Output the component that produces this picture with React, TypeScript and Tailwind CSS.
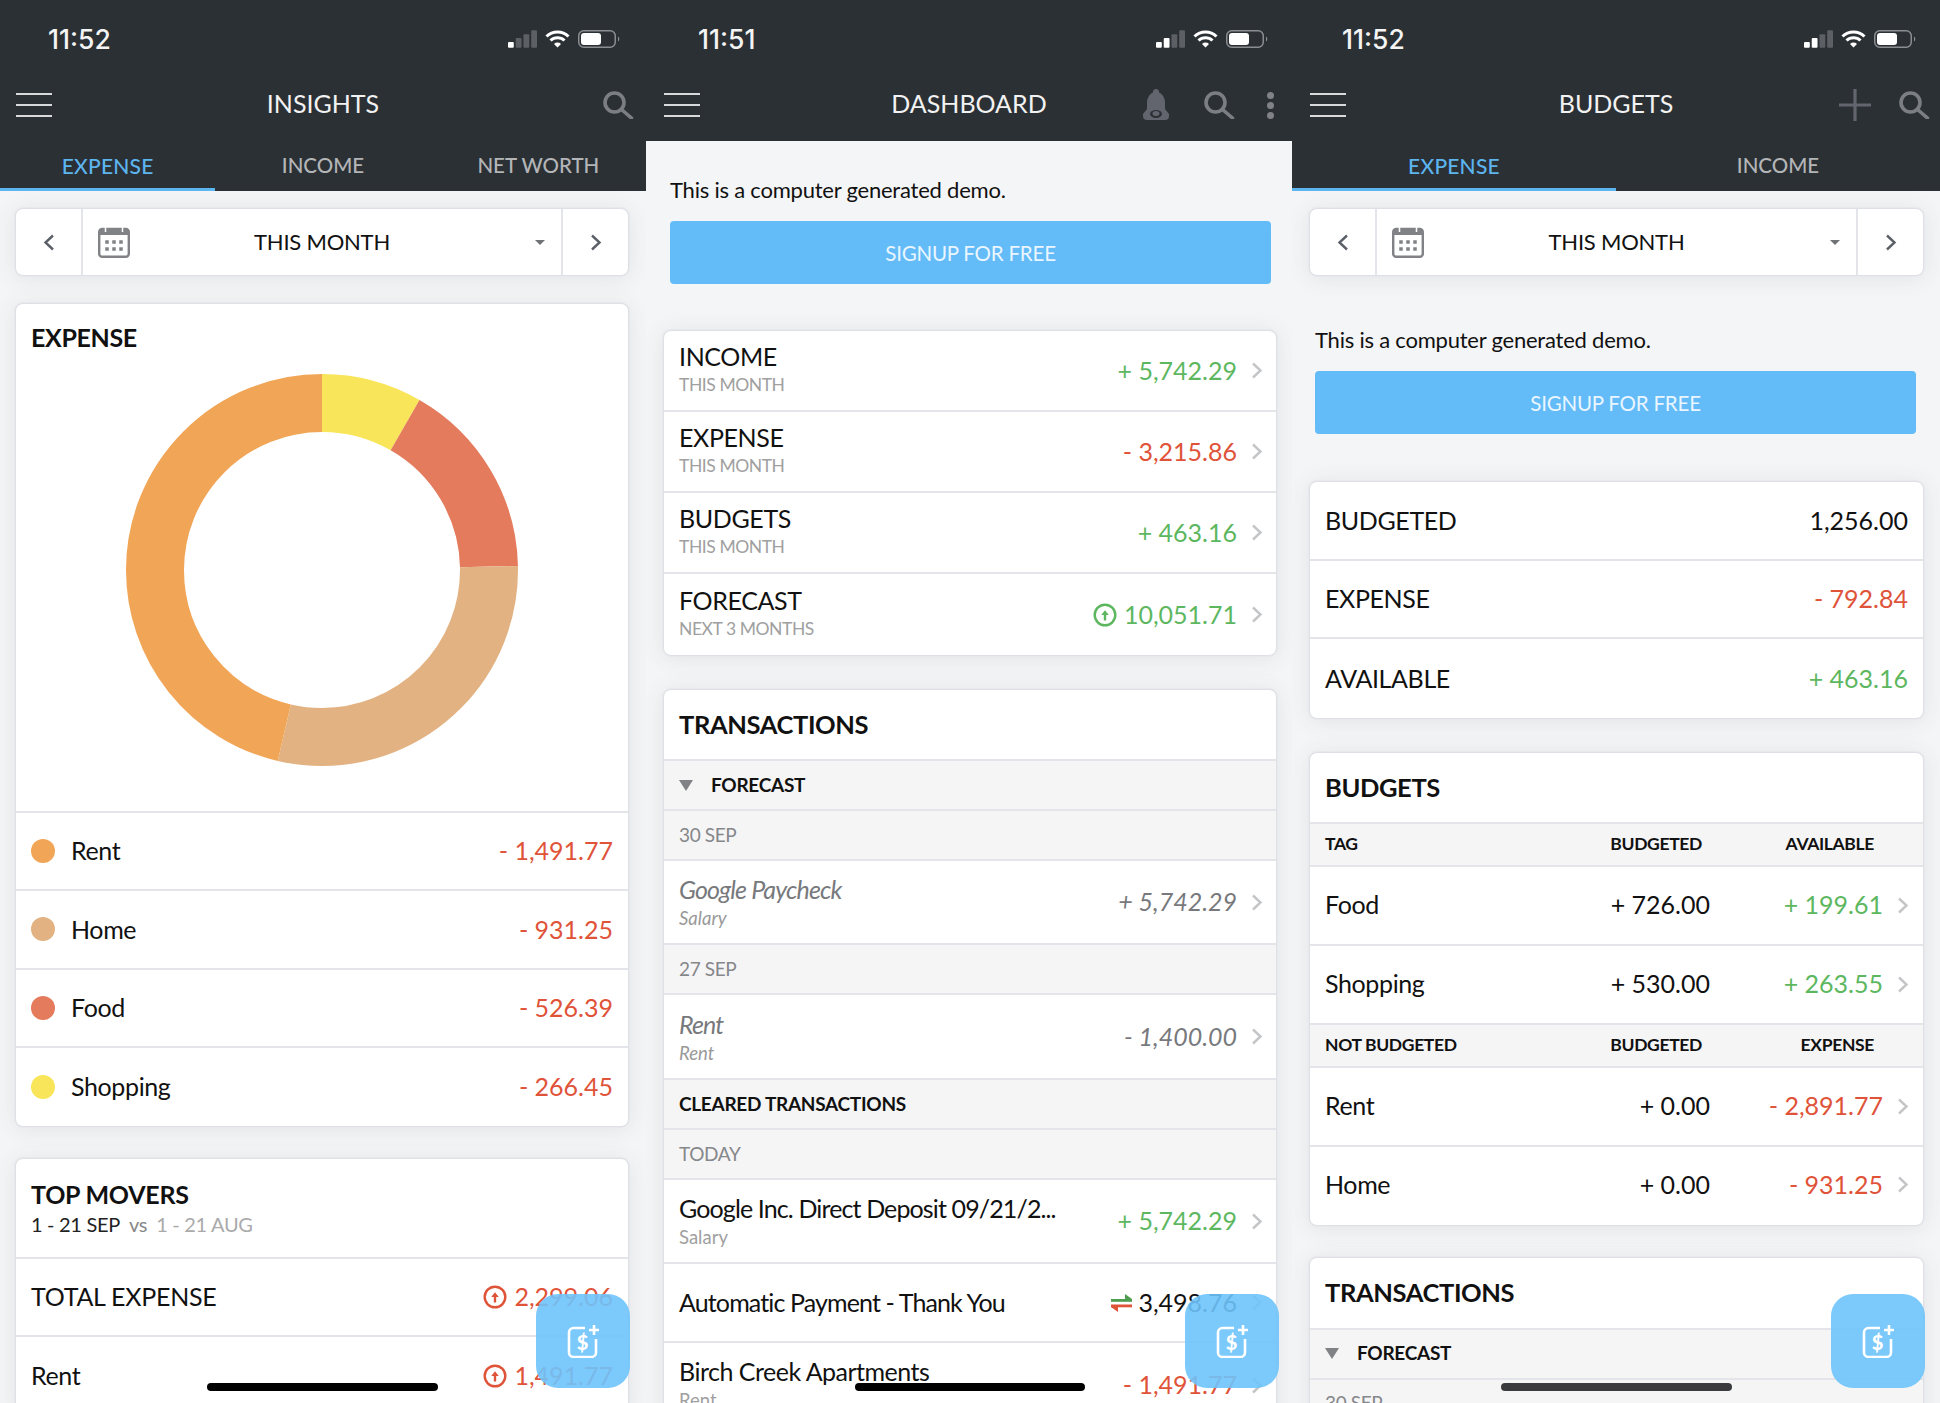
import type { ReactNode } from "react";

const RED = "text-[#df5339]";
const GREEN = "text-[#5db75f]";
const CARD = "bg-white rounded-[8px] border border-[#dfe0e6] shadow-[0_0_0_1px_#e8e9ed,0_2px_22px_rgba(60,70,100,0.10)] overflow-hidden";
const DIVIDE = "border-b-[2px] border-[#e4e5ea]";

function Search() {
  return (
    <svg width="32" height="28" viewBox="0 0 32 28" fill="none" stroke="#7b7e83" strokeWidth="3.6">
      <circle cx="12.5" cy="11.5" r="9.5" />
      <path d="M19.5 18.5l10 8.5" strokeLinecap="round" />
    </svg>
  );
}

function Burger() {
  return (
    <div className="flex flex-col gap-[9px] w-[36px]">
      <div className="h-[2px] bg-[#d8d9db]" />
      <div className="h-[2px] bg-[#d8d9db]" />
      <div className="h-[2px] bg-[#d8d9db]" />
    </div>
  );
}

function StatusBar({ time, bars, timeClass, rightClass }: { time: string; bars: number; timeClass: string; rightClass: string }) {
  return (
    <div className="h-[66px] flex items-start justify-between">
      <div className={`font-['Inter',sans-serif] font-medium text-[26.5px] leading-[30px] mt-[24px] text-[#f4f4f4] ${timeClass}`}>{time}</div>
      <div className={`flex items-center gap-[8px] mt-[30px] ${rightClass}`}>
        <svg width="29" height="18" viewBox="0 0 30 18">
          {[0, 1, 2, 3].map((i) => (
            <rect key={i} x={i * 8} y={12 - i * 4} width="6" height={6 + i * 4} rx="1" fill={i < bars ? "#ffffff" : "#5c5f63"} />
          ))}
        </svg>
        <svg width="25" height="18" viewBox="0 0 25 18" fill="none" stroke="#fff" strokeWidth="3">
          <path d="M1.5 6.5a15.5 15.5 0 0 1 22 0" />
          <path d="M5.5 10.5a10 10 0 0 1 14 0" />
          <path d="M12.5 17.5l-3.5-3.6a5 5 0 0 1 7 0z" fill="#fff" stroke="none" />
        </svg>
        <svg width="42" height="18" viewBox="0 0 42 18" fill="none">
          <rect x="0.75" y="0.75" width="36.5" height="16.5" rx="5" stroke="#8b8e91" strokeWidth="1.5" />
          <rect x="3" y="3" width="20" height="12" rx="3" fill="#fff" />
          <path d="M40 6.5a3 3 0 0 1 0 5z" fill="#8b8e91" />
        </svg>
      </div>
    </div>
  );
}

function Nav({ title, children, leftClass, rightClass }: { title: string; children: ReactNode; leftClass: string; rightClass: string }) {
  return (
    <div className="h-[75px] grid grid-cols-[1fr_auto_1fr] items-center">
      <div className={`pt-[3px] ${leftClass}`}><Burger /></div>
      <div className="text-[25px] text-[#f2f2f2]">{title}</div>
      <div className={`flex items-center justify-end pt-[3px] ${rightClass}`}>{children}</div>
    </div>
  );
}

function Tabs({ items }: { items: string[] }) {
  return (
    <div className="flex h-[50px]">
      {items.map((t, i) => (
        <div key={t} className={`flex-1 flex items-center justify-center pt-[2px] font-medium ${i === 0 ? "text-[21px] tracking-[0.01em] text-[#5db5ef] border-b-[3px] border-[#5db5ef]" : "text-[20.5px] text-[#b3b5b7] pb-[3px]"}`}>
          {t}
        </div>
      ))}
    </div>
  );
}

function Chevron({ dir = "right", className = "" }: { dir?: "left" | "right"; className?: string }) {
  return (
    <svg width="12" height="17" viewBox="0 0 12 17" fill="none" stroke="currentColor" strokeWidth="2.4" className={className}>
      <path d={dir === "right" ? "M2 1.5l7.5 7-7.5 7" : "M10 1.5l-7.5 7 7.5 7"} />
    </svg>
  );
}

function RowChevron() {
  return <Chevron className="text-[#c4c5c7] ml-[14px] shrink-0" />;
}

function DateSelect({ gutter }: { gutter: string }) {
  return (
    <div className={`${CARD} h-[68px] flex items-center ${gutter}`}>
      <div className="w-[67px] h-full flex items-center justify-center border-r-[2px] border-[#e4e5ea]">
        <Chevron dir="left" className="text-[#5b6068]" />
      </div>
      <div className="flex-1 h-full flex items-center">
        <svg width="32" height="32" viewBox="0 0 32 32" className="ml-[15px]">
          <rect x="1.2" y="3" width="29.600" height="27.800" rx="3" fill="#fff" stroke="#808285" strokeWidth="2.4" />
          <path d="M1 9V5a2 2 0 0 1 2-2h26a2 2 0 0 1 2 2v4z" fill="#808285" />
          <path d="M7.5 1v5M24.5 1v5" stroke="#fff" strokeWidth="1.5" />
          {[9, 16, 23].map((x) => [16, 23].map((y) => <rect key={`${x}-${y}`} x={x - 1.75} y={y - 1.75} width="3.500" height="3.500" fill="#808285" />))}
        </svg>
        <div className="flex-1 text-center text-[22px] text-[#111] tracking-[-0.01em] pr-[21px] pb-[1px]">THIS MONTH</div>
        <div className="w-0 h-0 border-x-[5px] border-x-transparent border-t-[5px] border-t-[#707274] mr-[16px]" />
      </div>
      <div className="w-[67px] h-full flex items-center justify-center border-l-[2px] border-[#e4e5ea]">
        <Chevron className="text-[#5b6068]" />
      </div>
    </div>
  );
}

function UpCircle({ color }: { color: string }) {
  return (
    <svg width="24" height="24" viewBox="0 0 24 24" fill="none" stroke={color} strokeWidth="2.4" className="mr-[7px]">
      <circle cx="12" cy="12" r="10.3" />
      <path d="M12 17.5v-6" />
      <path d="M8.2 12L12 7.2l3.8 4.8z" fill={color} stroke="none" />
    </svg>
  );
}

function Transfer() {
  return (
    <svg width="21" height="18" viewBox="0 0 21 18" fill="none" className="mr-[6px]">
      <path d="M0 5h21v2.800H0z" fill="#4f9d4f" />
      <path d="M14 0l7 5h-7z" fill="#4f9d4f" />
      <path d="M0 10.500h21v2.800H0z" fill="#df5339" />
      <path d="M7 18l-7-5h7z" fill="#df5339" />
    </svg>
  );
}

function Fab({ rightClass }: { rightClass: string }) {
  return (
    <div className={`absolute top-[1294px] w-[94px] h-[94px] rounded-[22px] bg-[#6ec3fb]/90 flex items-center justify-center ${rightClass}`}>
      <svg width="34" height="34" viewBox="0 0 34 34" fill="none" stroke="#fff" strokeWidth="2.6">
        <path d="M19 4H7.5A4.5 4.5 0 0 0 3 8.5v20A4.5 4.5 0 0 0 7.5 33h18a4.5 4.5 0 0 0 4.5-4.5V15" />
        <path d="M28 1v10M23 6h10" />
        <text x="16.5" y="26" textAnchor="middle" fontFamily="Lato, sans-serif" fontWeight="900" fontSize="20" fill="#fff" stroke="none">$</text>
      </svg>
    </div>
  );
}

function HomeBar({ className }: { className: string }) {
  return <div className={`absolute top-[1383px] h-[8px] rounded-full ${className}`} />;
}

function Amount({ value, color = "text-[#111]" }: { value: string; color?: string }) {
  return <span className={`text-[25px] whitespace-nowrap ${color}`}>{value}</span>;
}

const spending = [
  { name: "Rent", amount: 1491.77, label: "- 1,491.77", color: "#f1a556", dot: "bg-[#f1a556]" },
  { name: "Home", amount: 931.25, label: "- 931.25", color: "#e3b282", dot: "bg-[#e3b282]" },
  { name: "Food", amount: 526.39, label: "- 526.39", color: "#e47b5c", dot: "bg-[#e47b5c]" },
  { name: "Shopping", amount: 266.45, label: "- 266.45", color: "#f9e559", dot: "bg-[#f9e559]" },
];

function Donut() {
  const r = 167;
  const c = 2 * Math.PI * r;
  const total = spending.reduce((s, x) => s + x.amount, 0);
  let start = 0;
  // drawn from 12 o'clock going clockwise, smallest slice first
  const slices = [...spending].reverse().map((s) => {
    const len = (s.amount / total) * c;
    const el = <circle key={s.name} cx="196" cy="196" r={r} fill="none" stroke={s.color} strokeWidth="58" strokeDasharray={`${len} ${c - len}`} strokeDashoffset={-start} />;
    start += len;
    return el;
  });
  return (
    <svg width="392" height="392" viewBox="0 0 392 392" className="mx-auto -rotate-90">
      {slices}
    </svg>
  );
}

function Insights() {
  const gutter = "ml-[15px] mr-[17px]";
  return (
    <div className="relative w-[646px] h-full overflow-hidden bg-[#f4f5f6]">
      <div className="bg-[#2b3035]">
        <StatusBar time="11:52" bars={1} timeClass="ml-[48px]" rightClass="mr-[26px]" />
        <Nav title="INSIGHTS" leftClass="pl-[16px]" rightClass="pr-[12px]"><Search /></Nav>
        <Tabs items={["EXPENSE", "INCOME", "NET WORTH"]} />
      </div>
      <div className="h-[17px]" />
      <DateSelect gutter={gutter} />
      <div className={`${CARD} ${gutter} mt-[27px]`}>
        <div className="h-[509px] border-b-[2px] border-[#e4e5ea]">
          <div className="h-[67px] mb-[3px] flex items-center px-[15px] text-[25px] font-bold text-[#111] tracking-[-0.015em]">EXPENSE</div>
          <Donut />
        </div>
        {spending.map((s, i) => (
          <div key={s.name} className={`h-[78.3px] flex items-center pl-[15px] pr-[15px] ${i < 3 ? DIVIDE : ""}`}>
            <div className={`w-[24px] h-[24px] rounded-full ${s.dot}`} />
            <div className="flex-1 ml-[16px] text-[25px] text-[#111] tracking-[-0.015em]">{s.name}</div>
            <Amount value={s.label} color={RED} />
          </div>
        ))}
      </div>
      <div className={`${CARD} ${gutter} mt-[31px]`}>
        <div className={`h-[100px] px-[15px] pt-[20px] ${DIVIDE}`}>
          <div className="text-[25px] leading-[30px] font-bold text-[#111] tracking-[-0.01em]">TOP MOVERS</div>
          <div className="text-[20px] leading-[24px] mt-[3px] tracking-[-0.015em]">
            <span className="text-[#222]">1 - 21 SEP</span>
            <span className="text-[#888] ml-[9px]">vs</span>
            <span className="text-[#aaa] ml-[9px]">1 - 21 AUG</span>
          </div>
        </div>
        <div className={`h-[78px] flex items-center justify-between px-[15px] ${DIVIDE}`}>
          <span className="text-[25px] text-[#111] tracking-[-0.01em]">TOTAL EXPENSE</span>
          <div className="flex items-center"><UpCircle color="#df5339" /><Amount value="2,299.06" color={RED} /></div>
        </div>
        <div className="h-[78px] flex items-center justify-between px-[15px]">
          <span className="text-[25px] text-[#111] tracking-[-0.015em]">Rent</span>
          <div className="flex items-center"><UpCircle color="#df5339" /><Amount value="1,491.77" color={RED} /></div>
        </div>
      </div>
      <Fab rightClass="right-[16px]" />
      <HomeBar className="left-[207px] w-[231px] bg-black" />
    </div>
  );
}

function Demo({ className }: { className: string }) {
  return (
    <div className={className}>
      <div className="text-[22px] leading-[30px] text-[#111] tracking-[-0.01em]">This is a computer generated demo.</div>
      <div className="mt-[16px] h-[63px] pt-[1px] rounded-[4px] bg-[#63bbf8] flex items-center justify-center text-[20.5px] text-[#eaf6ff] tracking-[-0.01em]">SIGNUP FOR FREE</div>
    </div>
  );
}

function SummaryRow({ title, sub, children, last }: { title: string; sub: string; children: ReactNode; last?: boolean }) {
  return (
    <div className={`h-[81px] flex items-center pl-[15px] pr-[13px] ${last ? "" : DIVIDE}`}>
      <div className="flex-1 pb-[4px]">
        <div className="text-[25px] leading-[30px] text-[#111] tracking-[-0.015em]">{title}</div>
        <div className="text-[17.5px] leading-[22px] mt-[3px] text-[#a0a0a0] tracking-[-0.025em]">{sub}</div>
      </div>
      {children}
      <RowChevron />
    </div>
  );
}

function SectionHead({ children, bold }: { children: ReactNode; bold?: boolean }) {
  return <div className={`h-[50px] flex items-center px-[15px] text-[19px] bg-[#f5f5f6] ${DIVIDE} ${bold ? "font-bold text-[#111] tracking-[-0.015em]" : "text-[#85878a] tracking-[-0.02em]"}`}>{children}</div>;
}

function TxRow({ name, cat, value, color, italic, h, last, nameClass = "tracking-[-0.035em]" }: { name: string; cat: string; value: string; color: string; italic?: boolean; h: string; last?: boolean; nameClass?: string }) {
  return (
    <div className={`${h} flex items-center pl-[15px] pr-[13px] ${last ? "" : DIVIDE}`}>
      <div className={`flex-1 ${italic ? "italic" : ""}`}>
        <div className={`text-[25px] leading-[30px] ${nameClass} ${italic ? "text-[#77797c]" : "text-[#111]"}`}>{name}</div>
        <div className={`text-[18.5px] leading-[24px] mt-[2px] ${italic ? "text-[#999]" : "text-[#a0a0a0]"}`}>{cat}</div>
      </div>
      <Amount value={value} color={color} />
      <RowChevron />
    </div>
  );
}

function ForecastHead() {
  return (
    <SectionHead bold>
      <div className="w-0 h-0 border-x-[7px] border-x-transparent border-t-[11px] border-t-[#808285] mr-[18px]" />
      FORECAST
    </SectionHead>
  );
}

function Dashboard() {
  const gutter = "ml-[17px] mr-[15px]";
  return (
    <div className="relative w-[646px] h-full overflow-hidden bg-[#f4f5f6]">
      <div className="bg-[#2b3035]">
        <StatusBar time="11:51" bars={2} timeClass="ml-[52px]" rightClass="mr-[24px]" />
        <Nav title="DASHBOARD" leftClass="pl-[18px]" rightClass="pr-[18px]">
          <svg width="28" height="32" viewBox="0 0 28 32" fill="#62656d">
            <path d="M14 0a3 3 0 0 1 3 3.600C21 5.500 23 9.500 23 14v6l4 5v2a4 4 0 0 1-4 4H5a4 4 0 0 1-4-4v-2l4-5v-6c0-4.500 2-8.500 6-10.400A3 3 0 0 1 14 0z" />
            <ellipse cx="14" cy="25" rx="6" ry="4" fill="#2b3035" />
            <ellipse cx="14" cy="24.500" rx="3.500" ry="2.500" />
          </svg>
          <div className="ml-[33px]"><Search /></div>
          <div className="ml-[32px] flex flex-col gap-[3px]">
            <div className="w-[7px] h-[7px] rounded-full bg-[#808285]" />
            <div className="w-[7px] h-[7px] rounded-full bg-[#808285]" />
            <div className="w-[7px] h-[7px] rounded-full bg-[#808285]" />
          </div>
        </Nav>
      </div>
      <Demo className="pl-[24px] pr-[21px] pt-[34px]" />
      <div className={`${CARD} ${gutter} mt-[46px]`}>
        <SummaryRow title="INCOME" sub="THIS MONTH"><Amount value="+ 5,742.29" color={GREEN} /></SummaryRow>
        <SummaryRow title="EXPENSE" sub="THIS MONTH"><Amount value="- 3,215.86" color={RED} /></SummaryRow>
        <SummaryRow title="BUDGETS" sub="THIS MONTH"><Amount value="+ 463.16" color={GREEN} /></SummaryRow>
        <SummaryRow title="FORECAST" sub="NEXT 3 MONTHS" last>
          <UpCircle color="#5db75f" />
          <Amount value="10,051.71" color={GREEN} />
        </SummaryRow>
      </div>
      <div className={`${CARD} ${gutter} mt-[33px]`}>
        <div className={`h-[71px] flex items-center px-[15px] text-[25.5px] font-bold text-[#111] tracking-[-0.015em] ${DIVIDE}`}>TRANSACTIONS</div>
        <ForecastHead />
        <SectionHead>30 SEP</SectionHead>
        <TxRow name="Google Paycheck" cat="Salary" value="+ 5,742.29" color="text-[#77797c] italic" italic h="h-[84px]" />
        <SectionHead>27 SEP</SectionHead>
        <TxRow name="Rent" cat="Rent" value="- 1,400.00" color="text-[#77797c] italic" italic h="h-[85px]" />
        <SectionHead bold>CLEARED TRANSACTIONS</SectionHead>
        <SectionHead>TODAY</SectionHead>
        <TxRow name="Google Inc. Direct Deposit 09/21/2..." cat="Salary" value="+ 5,742.29" color={GREEN} h="h-[84px]" />
        <div className={`h-[79px] flex items-center pl-[15px] pr-[13px] ${DIVIDE}`}>
          <div className="flex-1 text-[25px] text-[#111] tracking-[-0.035em]">Automatic Payment - Thank You</div>
          <Transfer />
          <Amount value="3,498.76" />
          <RowChevron />
        </div>
        <TxRow name="Birch Creek Apartments" cat="Rent" value="- 1,491.77" color={RED} h="h-[84px]" last nameClass="tracking-[-0.02em] -mt-[2px] mb-[2px]" />
      </div>
      <Fab rightClass="right-[13px]" />
      <HomeBar className="left-[209px] w-[230px] bg-black" />
    </div>
  );
}

function SimpleRow({ label, value, color, last }: { label: string; value: string; color?: string; last?: boolean }) {
  return (
    <div className={`h-[78.5px] flex items-center justify-between pl-[15px] pr-[15px] ${last ? "" : DIVIDE}`}>
      <span className="text-[25px] text-[#111] tracking-[-0.015em]">{label}</span>
      <Amount value={value} color={color} />
    </div>
  );
}

function TableHead({ a, b, c }: { a: string; b: string; c: string }) {
  return (
    <div className={`h-[43px] flex items-center pl-[15px] bg-[#f5f5f6] text-[17.5px] font-bold text-[#111] tracking-[-0.02em] ${DIVIDE}`}>
      <div className="flex-1">{a}</div>
      <div className="w-[120px] text-right">{b}</div>
      <div className="w-[172px] text-right">{c}</div>
      <div className="w-[49px]" />
    </div>
  );
}

function BudgetRow({ name, a, b, color, last }: { name: string; a: string; b: string; color: string; last?: boolean }) {
  return (
    <div className={`${last ? "h-[78px] pb-[2px]" : `h-[79px] ${DIVIDE}`} flex items-center pl-[15px] pr-[14px]`}>
      <span className="flex-1 text-[25px] text-[#111] tracking-[-0.015em]">{name}</span>
      <div className="w-[120px] text-right"><Amount value={a} /></div>
      <div className="w-[173px] text-right"><Amount value={b} color={color} /></div>
      <RowChevron />
    </div>
  );
}

function Budgets() {
  const gutter = "ml-[17px] mr-[16px]";
  return (
    <div className="relative w-[648px] h-full overflow-hidden bg-[#f4f5f6]">
      <div className="bg-[#2b3035]">
        <StatusBar time="11:52" bars={2} timeClass="ml-[50px]" rightClass="mr-[24px]" />
        <Nav title="BUDGETS" leftClass="pl-[18px]" rightClass="pr-[10px]">
          <svg width="32" height="32" viewBox="0 0 32 32" stroke="#62656d" strokeWidth="3.2">
            <path d="M16 0v32M0 16h32" />
          </svg>
          <div className="ml-[27px]"><Search /></div>
        </Nav>
        <Tabs items={["EXPENSE", "INCOME"]} />
      </div>
      <div className="h-[17px]" />
      <DateSelect gutter={gutter} />
      <Demo className="pl-[23px] pr-[24px] pt-[49px]" />
      <div className={`${CARD} ${gutter} mt-[47px]`}>
        <SimpleRow label="BUDGETED" value="1,256.00" />
        <SimpleRow label="EXPENSE" value="- 792.84" color={RED} />
        <SimpleRow label="AVAILABLE" value="+ 463.16" color={GREEN} last />
      </div>
      <div className={`${CARD} ${gutter} mt-[33px]`}>
        <div className={`h-[71px] flex items-center px-[15px] text-[25.5px] font-bold text-[#111] tracking-[-0.015em] ${DIVIDE}`}>BUDGETS</div>
        <TableHead a="TAG" b="BUDGETED" c="AVAILABLE" />
        <BudgetRow name="Food" a="+ 726.00" b="+ 199.61" color={GREEN} />
        <BudgetRow name="Shopping" a="+ 530.00" b="+ 263.55" color={GREEN} />
        <TableHead a="NOT BUDGETED" b="BUDGETED" c="EXPENSE" />
        <BudgetRow name="Rent" a="+ 0.00" b="- 2,891.77" color={RED} />
        <BudgetRow name="Home" a="+ 0.00" b="- 931.25" color={RED} last />
      </div>
      <div className={`${CARD} ${gutter} mt-[31px]`}>
        <div className={`h-[72px] flex items-center px-[15px] text-[25.5px] font-bold text-[#111] tracking-[-0.015em] ${DIVIDE}`}>TRANSACTIONS</div>
        <ForecastHead />
        <SectionHead>30 SEP</SectionHead>
      </div>
      <Fab rightClass="right-[15px]" />
      <HomeBar className="left-[209px] w-[231px] bg-[#3a3b3d]" />
    </div>
  );
}

export default function App() {
  return (
    <div className="flex w-[1940px] h-[1403px] overflow-hidden font-['Lato',sans-serif]">
      <Insights />
      <Dashboard />
      <Budgets />
    </div>
  );
}
